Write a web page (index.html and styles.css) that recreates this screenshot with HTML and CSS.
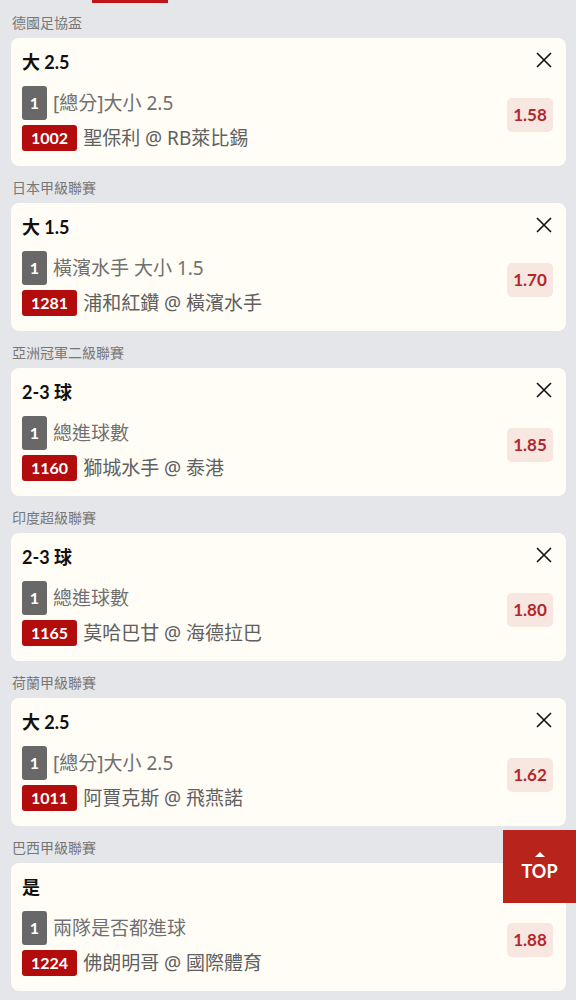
FILE: index.html
```html
<!DOCTYPE html>
<html lang="zh-Hant">
<head>
  <meta charset="UTF-8" />
  <meta name="viewport" content="width=device-width, initial-scale=1.0"/>
  <title>投注單</title>
  <link rel="stylesheet" href="styles.css">
</head>
<body>
  <div class="tab-line"></div>

  <div class="slip">
    <div class="league">德國足協盃</div>
    <div class="card">
      <div class="pick">大 2.5</div>
      <button class="close"><svg viewBox="0 0 16 16"><path d="M1 1L15 15M15 1L1 15"/></svg></button>
      <div class="lines">
        <div class="line"><span class="tag tag-gray">1</span><span class="market">[總分]大小 2.5</span></div>
        <div class="line"><span class="tag tag-red">1002</span><span class="match">聖保利 @ RB萊比錫</span></div>
      </div>
      <div class="odds">1.58</div>
    </div>

    <div class="league">日本甲級聯賽</div>
    <div class="card">
      <div class="pick">大 1.5</div>
      <button class="close"><svg viewBox="0 0 16 16"><path d="M1 1L15 15M15 1L1 15"/></svg></button>
      <div class="lines">
        <div class="line"><span class="tag tag-gray">1</span><span class="market">橫濱水手 大小 1.5</span></div>
        <div class="line"><span class="tag tag-red">1281</span><span class="match">浦和紅鑽 @ 橫濱水手</span></div>
      </div>
      <div class="odds">1.70</div>
    </div>

    <div class="league">亞洲冠軍二級聯賽</div>
    <div class="card">
      <div class="pick">2-3 球</div>
      <button class="close"><svg viewBox="0 0 16 16"><path d="M1 1L15 15M15 1L1 15"/></svg></button>
      <div class="lines">
        <div class="line"><span class="tag tag-gray">1</span><span class="market">總進球數</span></div>
        <div class="line"><span class="tag tag-red">1160</span><span class="match">獅城水手 @ 泰港</span></div>
      </div>
      <div class="odds">1.85</div>
    </div>

    <div class="league">印度超級聯賽</div>
    <div class="card">
      <div class="pick">2-3 球</div>
      <button class="close"><svg viewBox="0 0 16 16"><path d="M1 1L15 15M15 1L1 15"/></svg></button>
      <div class="lines">
        <div class="line"><span class="tag tag-gray">1</span><span class="market">總進球數</span></div>
        <div class="line"><span class="tag tag-red">1165</span><span class="match">莫哈巴甘 @ 海德拉巴</span></div>
      </div>
      <div class="odds">1.80</div>
    </div>

    <div class="league">荷蘭甲級聯賽</div>
    <div class="card">
      <div class="pick">大 2.5</div>
      <button class="close"><svg viewBox="0 0 16 16"><path d="M1 1L15 15M15 1L1 15"/></svg></button>
      <div class="lines">
        <div class="line"><span class="tag tag-gray">1</span><span class="market">[總分]大小 2.5</span></div>
        <div class="line"><span class="tag tag-red">1011</span><span class="match">阿賈克斯 @ 飛燕諾</span></div>
      </div>
      <div class="odds">1.62</div>
    </div>

    <div class="league">巴西甲級聯賽</div>
    <div class="card">
      <div class="pick">是</div>
      <button class="close"><svg viewBox="0 0 16 16"><path d="M1 1L15 15M15 1L1 15"/></svg></button>
      <div class="lines">
        <div class="line"><span class="tag tag-gray">1</span><span class="market">兩隊是否都進球</span></div>
        <div class="line"><span class="tag tag-red">1224</span><span class="match">佛朗明哥 @ 國際體育</span></div>
      </div>
      <div class="odds">1.88</div>
    </div>
  </div>

  <!-- 回到頂部 -->
  <a class="to-top" href="#">
    <span class="arrow"></span>
    <span>TOP</span>
  </a>
</body>
</html>
```

FILE: styles.css
```css
* { margin: 0; padding: 0; box-sizing: border-box; }

html, body {
  height: 100%;
  background: #e5e6ea;
  font-family: 'Lato', 'Noto Sans CJK TC', sans-serif;
  overflow: hidden;
}

.tab-line {
  position: absolute;
  top: 0;
  left: 92px;
  width: 76px;
  height: 3px;
  background: #c0161b;
}

.slip {
  padding: 1px 10px 0 11px;
}

.league {
  height: 37px;
  padding: 12px 0 0 1px;
  font-family: 'Noto Sans CJK TC', sans-serif;
  font-size: 14px;
  line-height: 18px;
  color: #777;
}

/* Tarjeta de apuesta */
.card {
  display: grid;
  grid-template-columns: 1fr auto;
  grid-template-rows: 24px auto;
  align-content: start;
  row-gap: 12px;
  height: 128px;
  padding: 12px 13px 0 11px;
  background: #fffdf6;
  border-radius: 8px;
}

.pick {
  font-size: 18px;
  line-height: 24px;
  font-weight: 700;
  color: #111;
}

.close {
  align-self: start;
  margin-top: 2px;
  margin-right: 1px;
  width: 16px;
  height: 16px;
  border: none;
  background: none;
  justify-self: end;
}

.close svg {
  display: block;
  width: 16px;
  height: 16px;
  stroke: #111;
  stroke-width: 1.6;
  fill: none;
}

.lines {
  display: flex;
  flex-direction: column;
  gap: 5px;
}

.line {
  display: flex;
  align-items: center;
  font-family: 'Noto Sans', 'Noto Sans CJK TC', sans-serif;
  font-size: 19px;
  font-weight: 400;
  line-height: 26px;
  color: #606060;
}

.tag {
  color: #fff;
  font-family: 'Lato', sans-serif;
  font-weight: 700;
  font-size: 16px;
  border-radius: 3px;
  text-align: center;
}

.tag-gray {
  width: 25px;
  height: 34px;
  line-height: 34px;
  background: #686868;
  margin-right: 6px;
}

.tag-red {
  height: 26px;
  line-height: 26px;
  padding: 0 9px;
  background: #b30c0c;
  margin-right: 6px;
}

.market { color: #707070; }

.odds {
  align-self: center;
  margin-bottom: 8px;
  width: 46px;
  height: 34px;
  line-height: 34px;
  text-align: center;
  background: #f8e6e1;
  border-radius: 5px;
  color: #b3272b;
  font-size: 17px;
  font-weight: 700;
}

.to-top {
  position: fixed;
  right: 0;
  bottom: 97px;
  width: 73px;
  height: 73px;
  background: #b8241c;
  color: #fff;
  text-decoration: none;
  font-size: 18px;
  font-weight: 700;
  display: flex;
  flex-direction: column;
  align-items: center;
  justify-content: center;
  gap: 3px;
}

.arrow {
  width: 0;
  height: 0;
  border-left: 5px solid transparent;
  border-right: 5px solid transparent;
  border-bottom: 5px solid #fff;
}
```
